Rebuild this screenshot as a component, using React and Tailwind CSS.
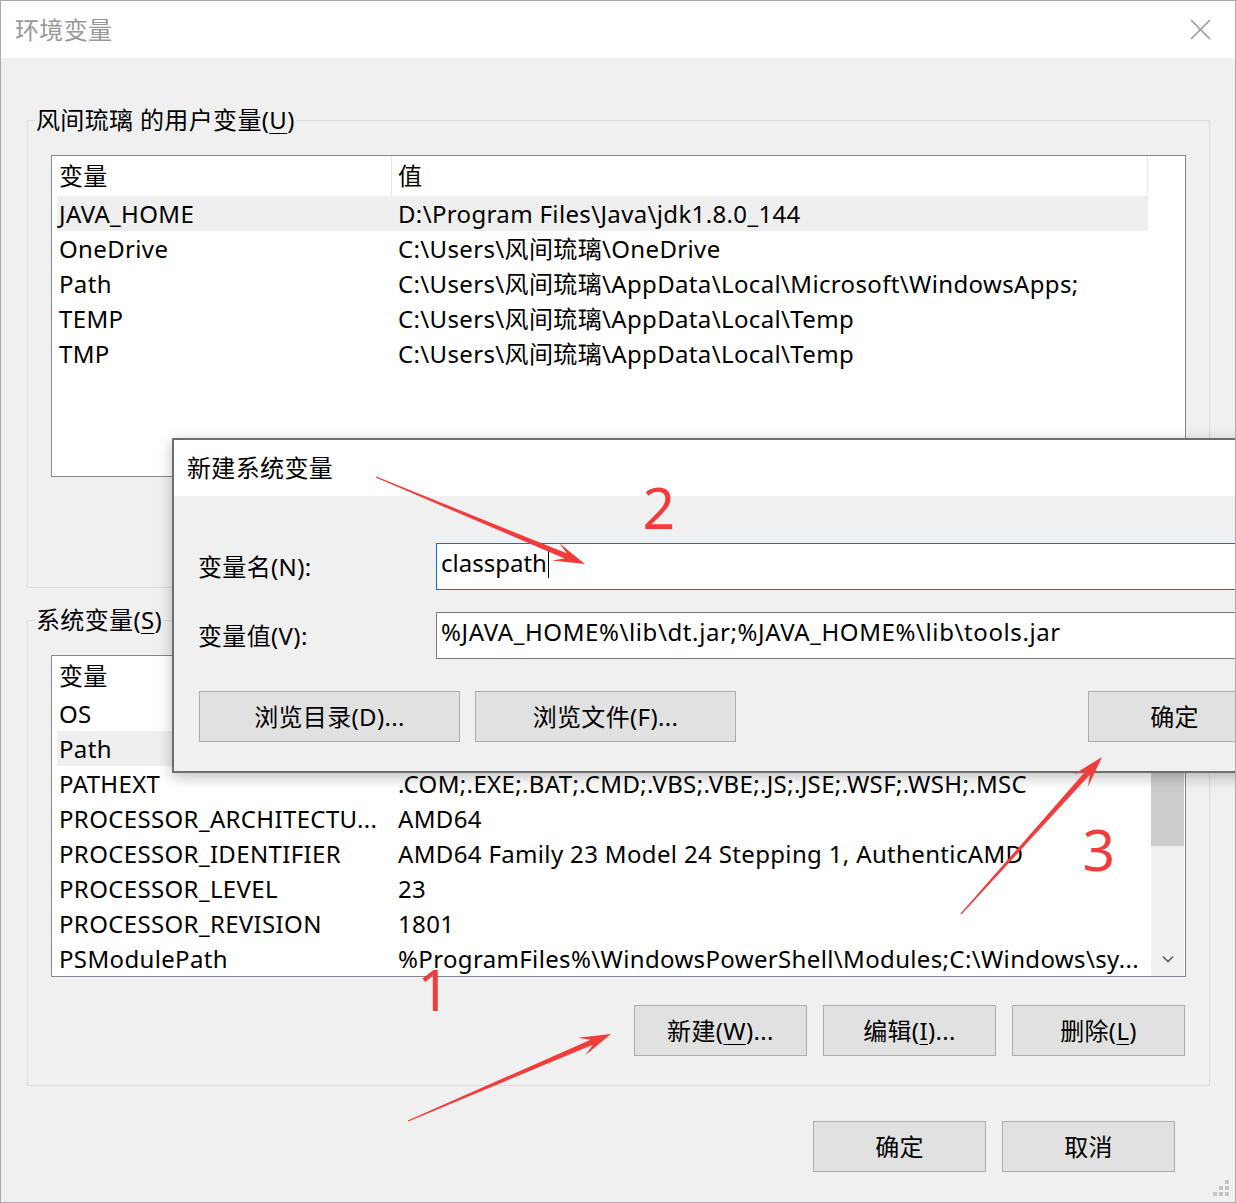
import React from 'react';

const FONT = "font-['Noto_Sans','Noto_Sans_CJK_SC',sans-serif]";
const RED = '#f23b3b';

const userRows = [
  ['JAVA_HOME', 'D:\\Program Files\\Java\\jdk1.8.0_144'],
  ['OneDrive', 'C:\\Users\\风间琉璃\\OneDrive'],
  ['Path', 'C:\\Users\\风间琉璃\\AppData\\Local\\Microsoft\\WindowsApps;'],
  ['TEMP', 'C:\\Users\\风间琉璃\\AppData\\Local\\Temp'],
  ['TMP', 'C:\\Users\\风间琉璃\\AppData\\Local\\Temp'],
];

const systemRows = [
  ['OS', 'Windows_NT'],
  ['Path', 'C:\\Windows\\system32;C:\\Windows;C:\\Windows\\System32\\Wbem;'],
  ['PATHEXT', '.COM;.EXE;.BAT;.CMD;.VBS;.VBE;.JS;.JSE;.WSF;.WSH;.MSC'],
  ['PROCESSOR_ARCHITECTU...', 'AMD64'],
  ['PROCESSOR_IDENTIFIER', 'AMD64 Family 23 Model 24 Stepping 1, AuthenticAMD'],
  ['PROCESSOR_LEVEL', '23'],
  ['PROCESSOR_REVISION', '1801'],
  ['PSModulePath', '%ProgramFiles%\\WindowsPowerShell\\Modules;C:\\Windows\\sy...'],
];

// 下划线助记符
function Mn({ children }) {
  return <span className="underline decoration-1 underline-offset-[4px]">{children}</span>;
}

function Btn({ children, className = '' }) {
  return (
    <div className={`shrink-0 h-[51px] bg-[#e1e1e1] border border-[#adadad] flex items-center justify-center text-[24px] text-black ${className}`}>
      {children}
    </div>
  );
}

function VarList({ rows, selected, scrollbar }) {
  return (
    <div className="mx-[23px] h-[322px] border border-[#828790] bg-white flex overflow-hidden">
      <div className="pl-[5px] w-[1096px] shrink-0 flex flex-col">
        <div className="h-[40px] flex items-center shrink-0">
          <div className="w-[334px] h-full flex items-center pl-[2px]">变量</div>
          <div className="flex-1 h-full flex items-center pl-[6px] border-l border-[#e5e5e5] border-r">值</div>
        </div>
        {rows.map((r, i) => (
          <div
            key={r[0]}
            className={`h-[35px] flex items-center shrink-0 whitespace-nowrap ${i === selected ? 'bg-[#efefef]' : ''}`}
          >
            <div className="w-[334px] pl-[2px]">{r[0]}</div>
            <div className="flex-1 pl-[7px]">{r[1]}</div>
          </div>
        ))}
      </div>
      {scrollbar && (
        <div className="ml-auto mr-[1px] w-[33px] bg-[#f0f0f0] flex flex-col">
          <div className="h-[34px]" />
          <div className="h-[156px] bg-[#cdcdcd]" />
          <div className="flex-1" />
          <div className="h-[34px] flex items-center justify-center">
            <svg width="12" height="8" viewBox="0 0 12 8">
              <path d="M1 1.5 L6 6.5 L11 1.5" fill="none" stroke="#606060" strokeWidth="1.6" />
            </svg>
          </div>
        </div>
      )}
    </div>
  );
}

function GroupBox({ title, children, className = '' }) {
  return (
    <fieldset className={`border border-[#dcdcdc] px-0 pb-0 ${className}`}>
      <legend className="ml-[7px] px-[1px] leading-[28px] text-[24px]">{title}</legend>
      {children}
    </fieldset>
  );
}

// 红色标注箭头
function Arrow({ from, to }) {
  const [tx, ty] = from;
  const [px, py] = to;
  const len = Math.hypot(px - tx, py - ty);
  const dx = (px - tx) / len;
  const dy = (py - ty) / len;
  const nx = -dy;
  const ny = dx;
  const L = 32;
  const W = 9.5;
  const neck = 21;
  const hx = px - dx * L;
  const hy = py - dy * L;
  const kx = px - dx * neck;
  const ky = py - dy * neck;
  const pts = [
    [tx + nx * 0.6, ty + ny * 0.6],
    [kx + nx * 2.8, ky + ny * 2.8],
    [hx + nx * W, hy + ny * W],
    [px, py],
    [hx - nx * W, hy - ny * W],
    [kx - nx * 2.8, ky - ny * 2.8],
    [tx - nx * 0.6, ty - ny * 0.6],
  ];
  return <polygon points={pts.map((p) => p.join(',')).join(' ')} fill={RED} />;
}

export default function App() {
  return (
    <div className={`relative w-[1236px] h-[1203px] overflow-hidden bg-[#f0f0f0] border border-[#aaaaaa] text-black tracking-[0.35px] ${FONT}`}>
      {/* 标题栏 */}
      <div className="h-[57px] bg-white flex items-center justify-between pl-[14px] pr-[24px]">
        <span className="text-[24px] text-[#999999]">环境变量</span>
        <svg width="21" height="21" viewBox="0 0 21 21">
          <path d="M1 1 L20 20 M20 1 L1 20" stroke="#9a9a9a" strokeWidth="1.6" />
        </svg>
      </div>

      <div className="pl-[26px] pr-[25px] text-[24px]">
        <GroupBox title={<>风间琉璃 的用户变量(<Mn>U</Mn>)</>} className="mt-[48px]">
          <div className="pt-[21px] pb-[110px]">
            <VarList rows={userRows} selected={0} />
          </div>
        </GroupBox>

        <GroupBox title={<>系统变量(<Mn>S</Mn>)</>} className="mt-[18px]">
          <div className="pt-[21px] pb-[29px]">
            <VarList rows={systemRows} selected={1} scrollbar />
            <div className="mt-[28px] mr-[24px] flex justify-end gap-[16px]">
              <Btn className="w-[173px]">新建(<Mn>W</Mn>)...</Btn>
              <Btn className="w-[173px]">编辑(<Mn>I</Mn>)...</Btn>
              <Btn className="w-[173px]">删除(<Mn>L</Mn>)</Btn>
            </div>
          </div>
        </GroupBox>

        <div className="mt-[35px] mr-[35px] flex justify-end gap-[16px]">
          <Btn className="w-[173px]">确定</Btn>
          <Btn className="w-[173px]">取消</Btn>
        </div>
      </div>

      {/* 调整大小手柄 */}
      <svg className="absolute right-[5px] bottom-[5px]" width="18" height="18" viewBox="0 0 18 18">
        {[[13, 1], [13, 7], [7, 7], [13, 13], [7, 13], [1, 13]].map(([x, y]) => (
          <rect key={`${x}-${y}`} x={x} y={y} width="4" height="4" fill="#c4c4c4" />
        ))}
      </svg>

      {/* 新建系统变量 对话框 */}
      <div className="absolute left-[171px] top-[437px] w-[1220px] border-2 border-[#6e6e6e] bg-[#f0f0f0] shadow-[0_4px_14px_rgba(0,0,0,0.25)]">
        <div className="h-[56px] bg-white flex items-center pl-[13px] text-[24px]">新建系统变量</div>
        <div className="pl-[24px] pt-[47px] pb-[29px] text-[24px]">
          <div className="flex items-center h-[47px]">
            <span className="w-[238px] shrink-0">变量名(N):</span>
            <div className="w-[900px] shrink-0 h-full bg-white border border-[#0078d7] flex items-center pl-[4px] pb-[7px] tracking-normal">
              classpath
              <span className="ml-[1px] mt-[2px] w-px h-[27px] bg-black" />
            </div>
          </div>
          <div className="flex items-center h-[47px] mt-[22px]">
            <span className="w-[238px] shrink-0">变量值(V):</span>
            <div className="w-[900px] shrink-0 h-full bg-white border border-[#7a7a7a] flex items-center pl-[4px] pb-[7px] tracking-[0.6px]">
              %JAVA_HOME%\lib\dt.jar;%JAVA_HOME%\lib\tools.jar
            </div>
          </div>
          <div className="flex mt-[32px] pl-[1px]">
            <Btn className="w-[261px]">浏览目录(D)...</Btn>
            <Btn className="w-[261px] ml-[15px]">浏览文件(F)...</Btn>
            <Btn className="w-[173px] ml-[352px]">确定</Btn>
          </div>
        </div>
      </div>

      {/* 红色标注 */}
      <svg className="absolute left-0 top-0 pointer-events-none" width="1236" height="1203">
        <Arrow from={[375, 476]} to={[584, 563]} />
        <Arrow from={[407, 1120]} to={[610, 1033]} />
        <Arrow from={[960, 913]} to={[1101, 756]} />
        <g fill={RED} fontFamily="Noto Sans, sans-serif" fontSize="57" textAnchor="middle">
          <text x="658" y="528">2</text>
          <text x="433" y="1010">1</text>
          <text x="1098" y="870">3</text>
        </g>
      </svg>
    </div>
  );
}
